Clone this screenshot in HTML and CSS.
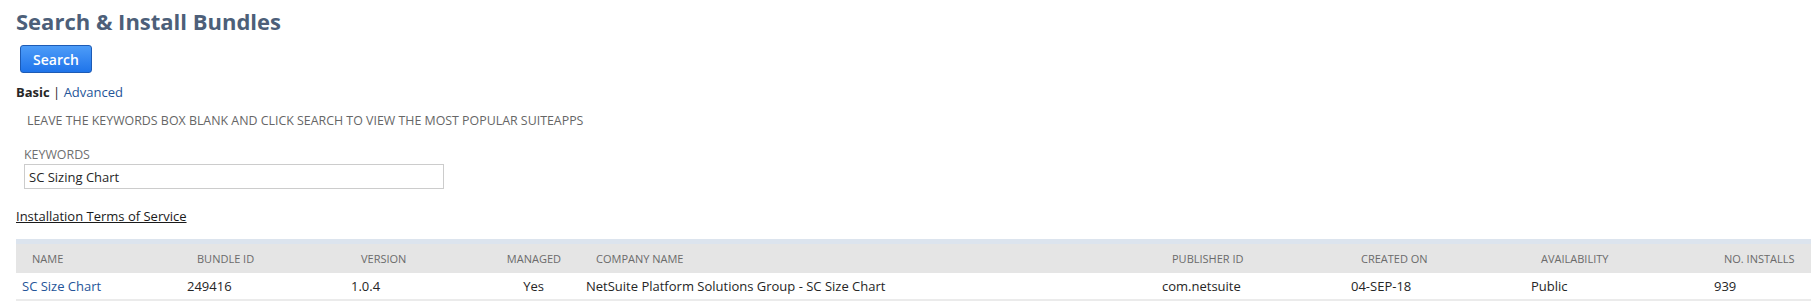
FILE: index.html
```html
<!DOCTYPE html>
<html>
<head>
<meta charset="utf-8">
<link rel="stylesheet" href="styles.css">
</head>
<body>
<div class="page">
  <h1 class="title">Search &amp; Install Bundles</h1>
  <div class="actions">
    <button class="btn-primary" type="button">Search</button>
  </div>
  <div class="modes">
    <span class="mode-active">Basic</span>
    <span class="mode-sep">|</span>
    <a class="mode-link" href="#">Advanced</a>
  </div>
  <p class="hint">LEAVE THE KEYWORDS BOX BLANK AND CLICK SEARCH TO VIEW THE MOST POPULAR SUITEAPPS</p>
  <div class="field">
    <label class="field-label" for="kw">KEYWORDS</label>
    <input id="kw" class="field-input" type="text" value="SC Sizing Chart">
  </div>
  <a class="terms" href="#">Installation Terms of Service</a>
  <div class="results">
    <div class="results-head">
      <div class="hc hc-first">NAME</div>
      <div class="hc">BUNDLE ID</div>
      <div class="hc">VERSION</div>
      <div class="hc hc-right">MANAGED</div>
      <div class="hc">COMPANY NAME</div>
      <div class="hc">PUBLISHER ID</div>
      <div class="hc">CREATED ON</div>
      <div class="hc">AVAILABILITY</div>
      <div class="hc">NO. INSTALLS</div>
    </div>
    <div class="results-row">
      <div class="dc dc-first"><a class="row-link" href="#">SC Size Chart</a></div>
      <div class="dc">249416</div>
      <div class="dc">1.0.4</div>
      <div class="dc dc-right">Yes</div>
      <div class="dc">NetSuite Platform Solutions Group - SC Size Chart</div>
      <div class="dc">com.netsuite</div>
      <div class="dc">04-SEP-18</div>
      <div class="dc">Public</div>
      <div class="dc">939</div>
    </div>
  </div>
</div>
</body>
</html>
```

FILE: styles.css
```css
* { box-sizing: border-box; }
html, body { margin: 0; padding: 0; background: #ffffff; }
body {
  font-family: "Open Sans", "Liberation Sans", sans-serif;
  color: #262626;
  font-size: 13px;
}
.page {
  padding: 6px 0 0 13px;
}
.title {
  margin: 0 0 0 3px;
  font-size: 22px;
  line-height: 30px;
  font-weight: 700;
  color: #4d5f79;
}
.actions {
  padding: 9px 0 0 7px;
}
.btn-primary {
  display: block;
  width: 72px;
  height: 28px;
  padding: 0;
  border: 1px solid #1d5bb5;
  border-radius: 3px;
  background: linear-gradient(#4d9cf8, #1f74ea);
  color: #ffffff;
  font-family: "Open Sans", "Liberation Sans", sans-serif;
  font-weight: 600;
  font-size: 14px;
}
.modes {
  margin: 10px 0 0 3px;
  font-size: 13px;
  line-height: 18px;
}
.mode-active { font-weight: 700; color: #262626; }
.mode-sep { color: #262626; margin: 0; }
.mode-link { color: #255599; text-decoration: none; }
.hint {
  margin: 12px 0 0 14px;
  font-size: 12.4px;
  line-height: 16px;
  color: #666666;
}
.field {
  display: flex;
  flex-direction: column;
  margin: 19px 0 0 11px;
  width: 420px;
}
.field-label {
  font-size: 12.4px;
  line-height: 14px;
  color: #6f6f6f;
}
.field-input {
  margin-top: 2px;
  width: 420px;
  height: 25px;
  border: 1px solid #cccccc;
  padding: 0 4px;
  font-family: "Open Sans", "Liberation Sans", sans-serif;
  font-size: 13px;
  color: #262626;
  outline: none;
}
.terms {
  display: inline-block;
  margin: 18px 0 0 3px;
  font-size: 13px;
  line-height: 18px;
  color: #1a1a1a;
  text-decoration: underline;
}
.results {
  margin: 14px 0 0 3px;
  border-top: 5px solid #dce4ee;
  border-bottom: 2px solid #ebebeb;
}
.results-head, .results-row {
  display: grid;
  grid-template-columns: 162px 164px 123px 112px 576px 189px 180px 183px 1fr;
  align-items: center;
}
.results-head {
  height: 29px;
  background: #e5e5e5;
}
.results-row {
  height: 26px;
  background: #ffffff;
}
.hc {
  padding-left: 19px;
  font-size: 11px;
  color: #6b6b6b;
  white-space: nowrap;
}
.hc-first { padding-left: 16px; }
.hc-right { text-align: right; padding-right: 16px; padding-left: 0; }
.dc {
  padding-left: 9px;
  font-size: 13px;
  color: #262626;
  white-space: nowrap;
}
.dc-first { padding-left: 6px; }
.dc-right { text-align: right; padding-right: 33px; padding-left: 0; }
.row-link { color: #255599; text-decoration: none; }
```
